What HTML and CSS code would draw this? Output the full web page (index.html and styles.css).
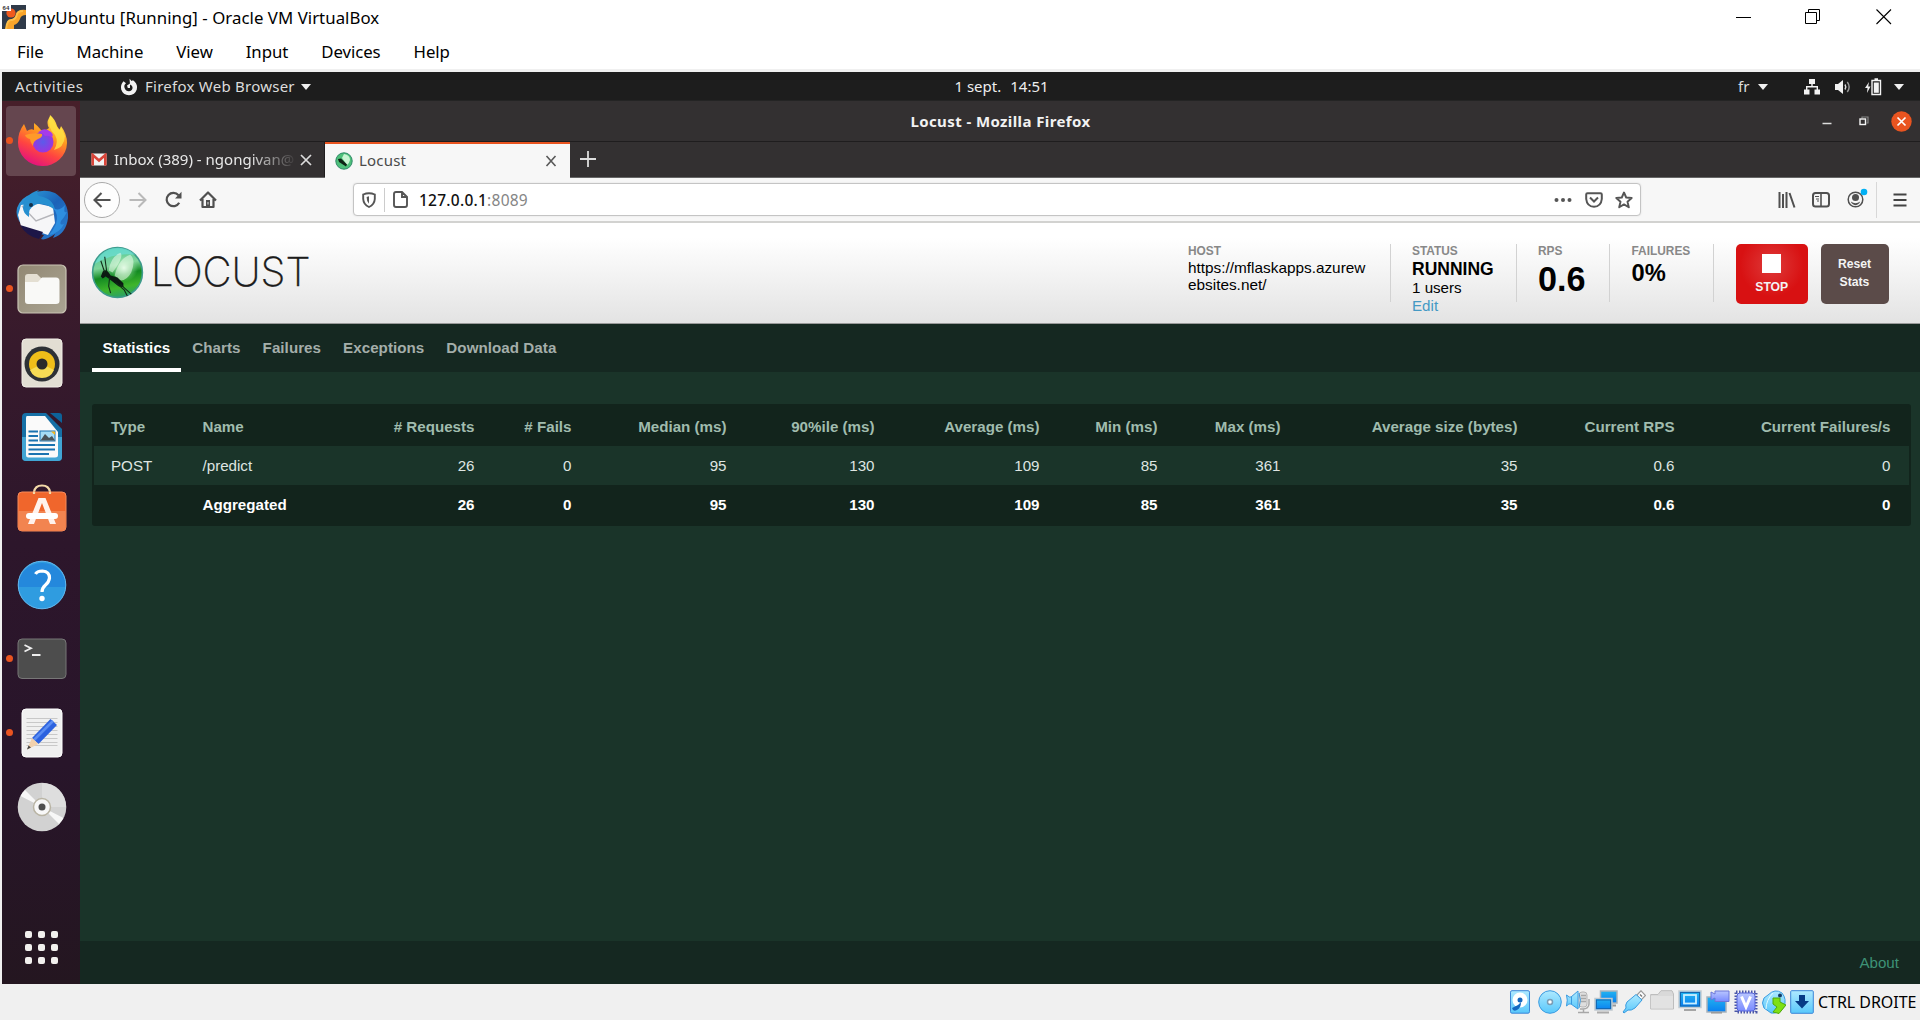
FILE: index.html
```
<!DOCTYPE html>
<html lang="en">
<head>
<meta charset="utf-8">
<title>myUbuntu [Running] - Oracle VM VirtualBox</title>
<link rel="stylesheet" href="styles.css">
</head>
<body>
<svg width="0" height="0" class="defs">
  <defs>
    <linearGradient id="ff" x1=".8" y1="0" x2=".35" y2="1"><stop offset="0" stop-color="#fff44f"/><stop offset=".4" stop-color="#ff9a1f"/><stop offset=".7" stop-color="#ff4540"/><stop offset="1" stop-color="#e3127e"/></linearGradient>
    <radialGradient id="ffc"><stop offset="0" stop-color="#5b5bea"/><stop offset="1" stop-color="#9a35e0"/></radialGradient>
    <linearGradient id="tb" x1="0" y1="0" x2="1" y2="1"><stop offset="0" stop-color="#2fa8e0"/><stop offset=".5" stop-color="#1c62b8"/><stop offset="1" stop-color="#2b7fd2"/></linearGradient>
    <linearGradient id="files" x1="0" y1="0" x2="1" y2="1"><stop offset="0" stop-color="#928873"/><stop offset="1" stop-color="#aaa493"/></linearGradient>
    <linearGradient id="aqua" x1="0" y1="0" x2="0" y2="1"><stop offset="0" stop-color="#aee9ff"/><stop offset="1" stop-color="#59c8fb"/></linearGradient>
    <linearGradient id="blue" x1="0" y1="0" x2="0" y2="1"><stop offset="0" stop-color="#22b4f0"/><stop offset="1" stop-color="#0a7ff0"/></linearGradient>
    <linearGradient id="violet" x1="0" y1="0" x2="0" y2="1"><stop offset="0" stop-color="#b9c6ff"/><stop offset="1" stop-color="#7a8bff"/></linearGradient>
    <linearGradient id="leaf" x1=".4" y1="0" x2=".6" y2="1"><stop offset="0" stop-color="#4cc79a"/><stop offset=".35" stop-color="#7fd49a"/><stop offset=".55" stop-color="#138a22"/><stop offset=".8" stop-color="#3fb52c"/><stop offset="1" stop-color="#2aa06c"/></linearGradient>
    <radialGradient id="glow" cx=".6" cy=".45" r=".4"><stop offset="0" stop-color="#e2fbe6"/><stop offset="1" stop-color="#7fdc8a" stop-opacity="0"/></radialGradient>
  </defs>
  <symbol id="bug" viewBox="0 0 54 54">
    <circle cx="27" cy="27" r="25.4" fill="url(#leaf)" stroke="#3c9a8b" stroke-width="1.6"/>
    <path d="M4 18A25 25 0 0 1 45 9Q25 6 4 18Z" fill="#6fe0dc" opacity=".65"/>
    <circle cx="30" cy="24" r="18" fill="url(#glow)"/>
    <path d="M18 25Q20 11 30 7Q34 11 22 27ZM24 30Q29 12 40 9Q46 14 41 27Q36 36 29 35Z" fill="#e9fbe9" opacity=".55"/>
    <path d="M10 31L12 26Q15 23 18 27L20 30L27 32L33 38L33 42L28 41L19 34L15 31L12 33Z" fill="#0c1a12"/>
    <path d="M14 27L10 15M16 26L14 11M19 32L18 41L20 48M25 37L34 45L37 51M30 39L41 49" fill="none" stroke="#102c18" stroke-width="1.1"/>
  </symbol>
  <symbol id="caret" viewBox="0 0 12 8"><path d="M1 1H11L6 7Z" fill="#f0f0f0"/></symbol>
</svg>

<div class="vm">
  <header class="win">
    <div class="titlebar">
      <svg class="vbox" width="24" height="24" viewBox="0 0 24 24"><rect width="24" height="24" fill="#2f3a49"/><path d="M5 24V19Q5 15 9 15Q13 14 14 10Q15 4 24 5V10Q19 10 18 14Q16 19 12 20V24Z" fill="#f9a52b"/><path d="M4 24Q5 14 10 15Q14 14 15 9Q16 6 21 6" stroke="#ffc04a" stroke-width="2" fill="none"/><circle cx="9" cy="8" r="4.6" fill="#ef5a1e"/><rect width="9" height="6" fill="#fff"/><text x="0.6" y="5.2" class="tiny">64</text></svg>
      <span class="wintitle">myUbuntu [Running] - Oracle VM VirtualBox</span>
      <div class="winbtns">
        <svg width="16" height="16" viewBox="0 0 16 16"><path d="M0 8.5H15" stroke="#000"/></svg>
        <svg width="16" height="16" viewBox="0 0 16 16" fill="none" stroke="#000"><path d="M.5 3.5H11.5V14.5H.5ZM3.5 3V.5H14.5V11.5H12"/></svg>
        <svg width="16" height="16" viewBox="0 0 16 16"><path d="M.5 .5L15 15M15 .5L.5 15" stroke="#000" stroke-width="1.1"/></svg>
      </div>
    </div>
    <nav class="menubar"><span>File</span><span>Machine</span><span>View</span><span>Input</span><span>Devices</span><span>Help</span></nav>
  </header>

  <div class="guest">
    <div class="gnome">
      <div class="gleft">
        <span class="act">Activities</span>
        <svg width="18" height="18" viewBox="0 0 18 18"><path d="M3.500 3.200L6 5.200Q3.600 7 4.600 10Q6 13.500 9.200 13.200Q13 12.500 12.500 9Q12 7 10 6.500L9.500 .8Q11 2 11.500 3L13 2.200L14.500 3.500Q18 7 16.800 11.500Q15 17 9 17.200Q3 17 1.200 11.500Q0 7 3.500 3.200Z" fill="#f2f2f2"/><path d="M7 7.500L10 5.500V10H7.800Z" fill="#f2f2f2"/></svg>
        <span class="app">Firefox Web Browser</span>
        <svg width="12" height="8"><use href="#caret"/></svg>
      </div>
      <div class="clock"><span>1 sept.</span><span>14:51</span></div>
      <div class="tray">
        <span class="lang">fr</span>
        <svg class="c1" width="12" height="8"><use href="#caret"/></svg>
        <svg class="net" width="18" height="16" viewBox="0 0 18 16"><path d="M6 0H12V5H6ZM1 10.500H6.500V15.500H1ZM11.500 10.500H17V15.500H11.500Z" fill="#f2f2f2"/><path d="M9 4V8M3.700 11V7.800H14.300V11" stroke="#f2f2f2" stroke-width="1.400" fill="none"/></svg>
        <svg class="vol" width="18" height="16" viewBox="0 0 18 16"><path d="M1 5H4L9 1V15L4 11H1Z" fill="#f2f2f2"/><path d="M11 5.500Q12.600 8 11 10.500" stroke="#ddd" stroke-width="1.400" fill="none"/><path d="M13.300 3Q17 8 13.300 13" stroke="#999" stroke-width="1.400" fill="none"/></svg>
        <svg class="bat" width="17" height="18" viewBox="0 0 17 18"><path d="M4 4L0 10H2.500L2 15L5.500 8.500H3.200Z" fill="#f2f2f2"/><path d="M7 2.500H15.500V16.500H7ZM9.500 1H13" fill="none" stroke="#f2f2f2" stroke-width="1.400"/><rect x="8.800" y="4.500" width="5" height="10.300" fill="#f2f2f2"/></svg>
        <svg class="c2" width="12" height="8"><use href="#caret"/></svg>
      </div>
    </div>

    <div class="desk">
      <aside class="dock">
        <div class="item on"><i></i><svg width="52" height="52" viewBox="0 0 52 52"><path d="M8 10L11 17Q15 14 18 16L18 9Q22 12 25 16Q30 17 33 14Q30 9 33 4Q34 3 34 1Q39 5 41 12Q42 14 44 16L45 12Q51 20 51 29A24.5 23.5 0 0 1 2 28Q2 18 8 10Z" fill="url(#ff)"/><circle cx="27" cy="28" r="10.5" fill="url(#ffc)"/><path d="M24 17Q29 13 35 18Q38 21 36 23Q31 21 29 22Q24 17 22 18Z" fill="#a63bea"/><path d="M9 21Q17 18 26 20Q27 23 22 25Q17 27 17 32Q14 28 14 25Q10 24 9 21Z" fill="#ff9a2a"/><path d="M34 2Q31 14 39 21Q43 28 38 36Q48 34 49 22L45 13L43 16Q38 8 34 2Z" fill="#ffe645" opacity=".75"/></svg></div>
        <div class="item"><svg width="54" height="54" viewBox="0 0 54 54"><path d="M17 6Q28 0 40 5Q54 14 53 30Q51 46 38 50L40 46Q30 53 26 51L29 47Q12 44 6 36Q0 28 2 20Q6 9 17 6Z" fill="url(#tb)"/><path d="M6 17L20 15L38 19L40 35L33 47L6 38L3 27Z" fill="#f6f6f8"/><path d="M7 18L21 33L39 26" fill="none" stroke="#b5b5ba" stroke-width="1.4"/><path d="M5 37L28 44L24 51Q11 48 5 37Z" fill="#1d1648"/><path d="M8 20Q9 6 24 2Q20 5 24 8Q38 10 40 22Q28 13 20 17Q13 20 14 29Q8 25 8 20Z" fill="#268fd0"/><circle cx="16" cy="17" r="2" fill="#15304a"/><path d="M38 20Q44 26 41 36Q38 43 34 47Q45 45 49 36Q44 38 46 33Q49 30 52 24Q48 26 50 17Q44 24 38 20Z" fill="#2e8ee0"/></svg></div>
        <div class="item"><i></i><svg width="50" height="50" viewBox="0 0 50 50"><rect x="1" y="1" width="48" height="48" rx="5" fill="url(#files)" stroke="#c9c4b4" stroke-width="1.2"/><path d="M8 13Q8 10 11 10H20L24 14H39V20H8Z" fill="#e4dfd2"/><path d="M8 18H21L25 13.5H39Q42.500 13.500 42.500 17V37Q42.500 40 39 40H11Q8 40 8 37Z" fill="#f9f9f7"/></svg></div>
        <div class="item"><svg width="42" height="50" viewBox="0 0 42 50"><rect x="1" y="1" width="40" height="48" rx="4" fill="#e2ded3" stroke="#f1eee7"/><circle cx="21" cy="26" r="17.500" fill="#2d3136"/><circle cx="21" cy="26" r="13" fill="#efbe19"/><path d="M9 32L21 26L33 32A13 13 0 0 1 9 32Z" fill="#f6dc55"/><circle cx="21" cy="26" r="5.500" fill="#2a2a2a"/></svg></div>
        <div class="item"><svg width="42" height="50" viewBox="0 0 42 50"><path d="M5 1H25L41 17V45Q41 49 37 49H5Q1 49 1 45V5Q1 1 5 1Z" fill="#1670a6"/><path d="M1 25H41V45Q41 49 37 49H5Q1 49 1 45Z" fill="#41a5d4"/><path d="M29 1H38Q41 1 41 4V11Z" fill="#0d6299"/><path d="M6 4H24L37 20V43Q37 45.500 34 45.500H7.500Q5 45.500 5 43V6Q5 4 6 4Z" fill="#fafafa"/><path d="M7.500 19.500H17M7.500 24H17M7.500 28.500H17M7.500 33H34M7.500 37.500H34M7.500 42H28" stroke="#1b73b0" stroke-width="2"/><rect x="19" y="19" width="15" height="10" fill="#a5dcf5" stroke="#1b73b0"/><path d="M19.500 28.500L24 22L28 26L31 24L34 28.500Z" fill="#4a5358"/><path d="M30 19.500H34V23Z" fill="#f3b51b"/></svg></div>
        <div class="item"><svg class="bag" width="50" height="48" viewBox="0 0 50 48"><path d="M17 10V8Q18 1.500 25 1.500Q32 1.500 33 8V10" fill="none" stroke="#f3d9a8" stroke-width="2.200"/><rect x="1" y="8" width="48" height="39" rx="4" fill="#f0662c" stroke="#f58a5b"/><path d="M1.500 27H48.500V43Q48.500 46.500 45 46.500H5Q1.500 46.500 1.500 43Z" fill="#f28450"/><path d="M17 10V8M33 10V8" stroke="#f3d9a8" stroke-width="2.200"/><path d="M11 40L21.500 14H28.500L39 40H33L25 19L17 40Z" fill="#fff2ec"/><rect x="9" y="29" width="32" height="6" rx="3" fill="#fff"/></svg></div>
        <div class="item"><svg width="50" height="50" viewBox="0 0 50 50"><circle cx="25" cy="25" r="24" fill="#2f9ce0"/><path d="M1 27A24 24 0 0 1 49 27Z" fill="#2488dc"/><circle cx="25" cy="25" r="23.800" fill="none" stroke="#63b6ec" stroke-width="1"/><path d="M18.500 14Q20 11 25.500 11Q32.500 11.500 32.500 18Q32 22 28.500 25Q25 28 25 32" fill="none" stroke="#fff" stroke-width="3.200"/><circle cx="25" cy="38.500" r="2.700" fill="#fff"/></svg></div>
        <div class="item"><i></i><svg width="50" height="42" viewBox="0 0 50 42"><rect x="1" y="1" width="48" height="39.500" rx="4" fill="#4d4d4d" stroke="#777"/><path d="M7.500 7L14 10.200L7.500 13.500" fill="none" stroke="#eee" stroke-width="1.800"/><path d="M15 17H23.500" stroke="#eee" stroke-width="2"/></svg></div>
        <div class="item"><i></i><svg width="42" height="50" viewBox="0 0 42 50"><rect x="1" y="1" width="40" height="48" rx="4" fill="#f0f0f0" stroke="#fff"/><path d="M5.500 10.500H36.500M5.500 14.500H36.500M5.500 18.500H36.500M5.500 22.500H36.500M5.500 26.500H36.500M5.500 30.500H36.500M5.500 34.500H36.500M5.500 37.500H36.500" stroke="#c8c8c8"/><path d="M11 30L29.500 11L36 17L17.500 36Z" fill="#2c62df"/><path d="M13 32L32 13" stroke="#5a8df2" stroke-width="2.500"/><path d="M11 30L17.500 36L6 41.500Z" fill="#f2d1ad"/><path d="M6 41.500L7.500 37.500L10 39.500Z" fill="#444"/></svg></div>
        <div class="item"><svg width="50" height="50" viewBox="0 0 50 50"><circle cx="25" cy="25" r="24.300" fill="#d2d2d2"/><path d="M25 25L8 8A24 24 0 0 0 3.500 14ZM25 25L46.500 36A24 24 0 0 1 42 42Z" fill="#f7f7f7"/><path d="M25 25L25 1A24 24 0 0 1 49 25Z" fill="#dedede"/><circle cx="25" cy="25" r="8.500" fill="#f8f8f8" stroke="#b9b4a4" stroke-width="1.500"/><circle cx="25" cy="25" r="3.500" fill="#505050"/></svg></div>
        <div class="grid"><b></b><b></b><b></b><b></b><b></b><b></b><b></b><b></b><b></b></div>
      </aside>

      <section class="ffx">
        <div class="fftitle">
          <span>Locust - Mozilla Firefox</span>
          <div class="ffbtns">
            <svg width="10" height="10" viewBox="0 0 10 10"><path d="M.5 7.500H9.500" stroke="#ddd" stroke-width="1.500"/></svg>
            <svg width="10" height="10" viewBox="0 0 10 10"><path d="M3 2.500V1H9V7H7.500" fill="none" stroke="#888" stroke-width="1.200"/><rect x="1" y="3" width="5.500" height="5.500" fill="none" stroke="#f4f4f4" stroke-width="1.400"/></svg>
            <svg width="21" height="21" viewBox="0 0 21 21"><circle cx="10.500" cy="10.500" r="10.200" fill="#e95420"/><path d="M6.500 6.500L14.500 14.500M14.500 6.500L6.500 14.500" stroke="#fff" stroke-width="1.700"/></svg>
          </div>
        </div>
        <div class="tabs">
          <div class="tab">
            <svg width="16" height="13" viewBox="0 0 16 13"><rect x=".5" y=".5" width="15" height="12" rx="1" fill="#f2f2f2"/><path d="M1.700 12.500V2L8 7.500L14.300 2V12.500" fill="none" stroke="#d9453a" stroke-width="2.600"/></svg>
            <span class="tt fade">Inbox (389) - ngongivan@</span>
            <svg class="x" width="12" height="12" viewBox="0 0 12 12"><path d="M1 1L11 11M11 1L1 11" stroke="#dcdcdc" stroke-width="1.700"/></svg>
          </div>
          <div class="tab active">
            <svg width="18" height="18" viewBox="0 0 18 18"><circle cx="9" cy="9" r="8.200" fill="#4ec07a" stroke="#2f8a68"/><path d="M9 2Q15 3 15 8Q14 12 12 13L7 6Z" fill="#c8f5d2"/><path d="M3 7L6 6.500L12 12.500L11 14.500L4 10Z" fill="#0e2415"/></svg>
            <span class="tt">Locust</span>
            <svg class="x" width="12" height="12" viewBox="0 0 12 12"><path d="M1.500 1L10.500 11M10.500 1L1.500 11" stroke="#585858" stroke-width="1.600"/></svg>
          </div>
          <svg class="plus" width="16" height="16" viewBox="0 0 16 16"><path d="M8 0V16M0 8H16" stroke="#ddd" stroke-width="1.800"/></svg>
        </div>
        <div class="toolbar">
          <div class="navs">
            <span class="back"><svg width="18" height="18" viewBox="0 0 18 18"><path d="M17.500 9H1.500M8.500 2L1.500 9L8.500 16" fill="none" stroke="#505050" stroke-width="2.100"/></svg></span>
            <svg class="fwd" width="18" height="16" viewBox="0 0 18 16"><path d="M.5 8H16M9.500 1L16.500 8L9.500 15" fill="none" stroke="#b9b9b9" stroke-width="2"/></svg>
            <svg class="rel" width="18" height="17" viewBox="0 0 18 17"><path d="M14.200 11.800A6.700 6.700 0 1 1 13.500 4.200" fill="none" stroke="#505050" stroke-width="2.200"/><path d="M16.500 .8V7.500H10Z" fill="#505050"/></svg>
            <svg class="home" width="18" height="18" viewBox="0 0 18 18"><path d="M1 9.500L9 1.500L17 9.500M3.500 8V16H14.500V8" fill="none" stroke="#505050" stroke-width="2.200" stroke-linejoin="round"/><path d="M7 16V9H11V16Z" fill="#505050"/><path d="M9 11V13.500" stroke="#ddd"/></svg>
          </div>
          <div class="url">
            <svg class="sh" width="14" height="16" viewBox="0 0 14 16"><path d="M1.200 2.500Q7 0 12.800 2.500V7Q12.500 12.500 7 15Q1.500 12.500 1.200 7Z" fill="none" stroke="#555" stroke-width="1.900"/><path d="M7 4.200V11.800Q4.600 9.500 4.600 5Z" fill="#555"/></svg>
            <i></i>
            <svg class="doc" width="15" height="17" viewBox="0 0 15 17"><path d="M3 1H9L14 6V14Q14 16 12 16H3Q1 16 1 14V3Q1 1 3 1ZM9 1V6H14" fill="none" stroke="#555" stroke-width="1.900"/></svg>
            <span class="addr"><b>127.0.0.1</b>:8089</span>
            <svg class="dots" width="18" height="6" viewBox="0 0 18 6" fill="#555"><circle cx="2.500" cy="3" r="2"/><circle cx="9" cy="3" r="2"/><circle cx="15.500" cy="3" r="2"/></svg>
            <svg class="pk" width="18" height="16" viewBox="0 0 18 16"><path d="M2.500 1.200H15.500Q16.800 1.200 16.800 2.500V7Q16 14.500 9 14.800Q2 14.500 1.200 7V2.500Q1.200 1.200 2.500 1.200Z" fill="none" stroke="#555" stroke-width="2"/><path d="M5 5.500L9 9.500L13 5.500" fill="none" stroke="#555" stroke-width="2"/></svg>
            <svg class="star" width="18" height="18" viewBox="0 0 18 18"><path d="M9 1.500L11.200 6.500L16.700 7L12.500 10.800L13.800 16.300L9 13.400L4.200 16.300L5.500 10.800L1.300 7L6.800 6.500Z" fill="none" stroke="#555" stroke-width="1.900" stroke-linejoin="round"/></svg>
          </div>
          <div class="rtools">
            <svg width="18" height="16" viewBox="0 0 18 16"><path d="M1.500 0V16M5 2V16M8.500 0V16M11.500 1L16.500 15.500" stroke="#505050" stroke-width="2"/></svg>
            <svg class="side" width="18" height="16" viewBox="0 0 18 16"><rect x="1" y="1" width="16" height="13.500" rx="2.500" fill="none" stroke="#505050" stroke-width="2"/><path d="M9 1V14" stroke="#505050" stroke-width="1.600"/><path d="M3 4.500H7M4 7H7M5 9H7" stroke="#505050"/></svg>
            <svg class="acc" width="21" height="20" viewBox="0 0 21 20"><circle cx="8.500" cy="11.500" r="7.300" fill="none" stroke="#505050" stroke-width="1.500"/><circle cx="8.500" cy="9.500" r="3.500" fill="#505050"/><path d="M3.800 13.500Q8.500 17 13.200 13.500Q12 16.800 8.500 17.300Q5 16.800 3.800 13.500Z" fill="#505050"/><circle cx="17" cy="4" r="3.300" fill="#00b0f4"/></svg>
            <i></i>
            <svg class="burg" width="14" height="14" viewBox="0 0 14 14"><path d="M.5 1.500H13.500M.5 7H13.500M.5 12.500H13.500" stroke="#444" stroke-width="2"/></svg>
          </div>
        </div>

        <main class="page">
          <header class="top">
            <svg class="mark" width="53" height="53"><use href="#bug"/></svg>
            <span class="logo">LOCUST</span>
            <div class="box host"><label>HOST</label><p>https://mflaskapps.azurewebsites.net/</p></div>
            <div class="box status"><label>STATUS</label><strong>RUNNING</strong><p>1 users</p><a>Edit</a></div>
            <div class="box rps"><label>RPS</label><strong>0.6</strong></div>
            <div class="box fails"><label>FAILURES</label><strong>0%</strong></div>
            <div class="btn stop"><i></i>STOP</div>
            <div class="btn reset">Reset<br>Stats</div>
          </header>
          <nav class="nav"><a class="sel">Statistics</a><a>Charts</a><a>Failures</a><a>Exceptions</a><a>Download Data</a></nav>
          <div class="content">
            <table>
              <colgroup><col class="w1"><col class="w2"><col class="w3"><col class="w4"><col class="w5"><col class="w6"><col class="w7"><col class="w8"><col class="w9"><col class="w10"><col class="w11"><col class="w12"></colgroup>
              <thead><tr><th>Type</th><th>Name</th><th># Requests</th><th># Fails</th><th>Median (ms)</th><th>90%ile (ms)</th><th>Average (ms)</th><th>Min (ms)</th><th>Max (ms)</th><th>Average size (bytes)</th><th>Current RPS</th><th>Current Failures/s</th></tr></thead>
              <tbody>
                <tr><td>POST</td><td>/predict</td><td>26</td><td>0</td><td>95</td><td>130</td><td>109</td><td>85</td><td>361</td><td>35</td><td>0.6</td><td>0</td></tr>
                <tr class="total"><td></td><td>Aggregated</td><td>26</td><td>0</td><td>95</td><td>130</td><td>109</td><td>85</td><td>361</td><td>35</td><td>0.6</td><td>0</td></tr>
              </tbody>
            </table>
          </div>
          <footer class="foot"><a>About</a></footer>
        </main>
      </section>
    </div>
  </div>

  <div class="statusbar">
    <svg viewBox="0 0 24 24"><rect x="2.500" y=".7" width="19" height="22.500" rx="1.500" fill="url(#aqua)" stroke="#3b86d8"/><circle cx="12" cy="10" r="7.500" fill="#fff"/><circle cx="12" cy="10" r="2.500" fill="#1668c0"/><path d="M4 18L10 15L13 12Q13 18 9 20Q5 22 4 18Z" fill="#1668c0"/></svg>
    <svg viewBox="0 0 24 24"><circle cx="12" cy="12" r="11.300" fill="url(#aqua)" stroke="#3b9be0"/><circle cx="12" cy="12" r="2.500" fill="#fff" stroke="#7a9cb5" stroke-width="1.500"/></svg>
    <svg viewBox="0 0 24 24"><rect x="13" y="2" width="8" height="15" rx="3" fill="#dedede" stroke="#b5b5b5"/><path d="M15 5.500H20M15 8.500H20M15 11.500H20M23 9V14Q22.500 19 17 19H14M17.500 19V22M12 22.500H23" stroke="#a8a8a8" stroke-width="1.500" fill="none"/><path d="M.5 5Q4 8 5 7L12 1V19L5 14Q3 13 .5 16Q2 10 .5 5Z" fill="url(#aqua)" stroke="#3b9be0"/><path d="M5.500 7V14M13 3Q16 10 13 18" fill="none" stroke="#3b9be0"/></svg>
    <svg viewBox="0 0 24 24"><rect x="6.500" y="1" width="16.500" height="12" fill="url(#blue)" stroke="#a9b3bb" stroke-width="1.500"/><path d="M17 15.500H22" stroke="#999" stroke-width="2"/><rect x="1" y="8.500" width="17" height="11.500" fill="url(#blue)" stroke="#c0c8ce" stroke-width="1.500"/><rect x="2.500" y="10" width="14" height="8.500" fill="none" stroke="#1469b5"/><path d="M3 22.500H15" stroke="#aaa" stroke-width="2"/></svg>
    <svg viewBox="0 0 24 24"><path d="M15 5L19 .8L23.500 5.500L19 10Z" fill="#fff" stroke="#9a9a9a" stroke-width="1.200"/><path d="M18 4.500L20 6.500" stroke="#777" stroke-width="1.500"/><path d="M5 12L14 4.500L20 10L13 18Q9 21 6 20L2 23L1 22L4 18Q3 15 5 12Z" fill="url(#aqua)" stroke="#3b9be0"/></svg>
    <svg viewBox="0 0 24 24"><path d="M.7 4.500H8L11 .7H22L23.500 4V19H.7Z" fill="#d9d9d9" stroke="#bdbdbd"/><path d="M1 6H23V18.500H1Z" fill="#e2e2e2"/></svg>
    <svg viewBox="0 0 24 24"><rect x="1" y="1" width="22" height="16.500" fill="#2b9ff0" stroke="#c3cbd1" stroke-width="1.500"/><rect x="2.500" y="2.500" width="19" height="13.500" fill="url(#blue)" stroke="#1666ad"/><rect x="6" y="5" width="12" height="8.500" fill="none" stroke="#c9efff" stroke-width="1.800"/><path d="M6 20H18" stroke="#a5a5a5" stroke-width="2"/></svg>
    <svg viewBox="0 0 24 24"><rect x="1" y="7" width="19" height="15" fill="url(#blue)" stroke="#a8b2bb" stroke-width="1.500"/><path d="M5 22.800H16" stroke="#999" stroke-width="1.500"/><path d="M5 2L9 4V1H23V11.500H9V8L5 10Z" fill="url(#violet)" stroke="#6a76d8"/></svg>
    <svg viewBox="0 0 24 24"><rect x="2" y="2" width="20" height="20" fill="none" stroke="#4b57a8" stroke-width="3" stroke-dasharray="1.500 1.500"/><rect x="3" y="3" width="18" height="18" rx="3" fill="url(#violet)" stroke="#5665d8"/><path d="M7.500 6.500L12 17L16.500 6.500" fill="none" stroke="#fff" stroke-width="3"/></svg>
    <svg viewBox="0 0 24 24"><path d="M6 5Q13-2 20 3Q25 9 22 17Q17 24 9 23L2 18Q-1 13 2 8Z" fill="url(#aqua)" stroke="#3b9be0"/><path d="M4 19Q4 10 11 3" fill="none" stroke="#e3fbff"/><circle cx="18" cy="5.500" r="2" fill="#123b66"/><path d="M11 8H18V12L24 15L17 23.500L11 22L15 17L11 14Z" fill="#7fe014" stroke="#4ea80c"/></svg>
    <svg viewBox="0 0 24 24"><rect x=".7" y=".7" width="22.600" height="22.600" rx="1" fill="url(#aqua)" stroke="#3b86d8"/><path d="M9 5H15V11H19L12 18.500L5 11H9Z" fill="#063a86"/></svg>
    <span>CTRL DROITE</span>
  </div>
</div>
</body>
</html>
```

FILE: styles.css
```
* { box-sizing: border-box; }
body { margin: 0; background: #fff; }
svg { display: block; flex: none; }
.defs { position: absolute; }
p { margin: 0; }

.vm { width: 1920px; height: 1020px; display: flex; flex-direction: column; background: #f0f0f0; overflow: hidden; }

/* Host window */
.win { height: 69px; background: #fff; font-family: "Noto Sans", "Open Sans", sans-serif; color: #000; flex: none; }
.titlebar { height: 34px; display: flex; align-items: center; padding-left: 2px; }
.tiny { font: bold 6px "Liberation Sans", sans-serif; fill: #333; }
.wintitle { margin-left: 5px; font-size: 16.8px; line-height: 34px; letter-spacing: .05px; padding-top: 1px; flex: 1; }
.winbtns { display: flex; gap: 54px; padding-right: 28px; }
.winbtns svg:first-child { margin-right: -1px; }
.winbtns svg:last-child { margin-left: 1px; }
.menubar { display: flex; padding-left: 17px; gap: 33px; font-size: 16.8px; line-height: 35px; letter-spacing: -.07px; }

/* Guest screen */
.guest { height: 912px; margin: 3px 0 0 2px; display: flex; flex-direction: column; flex: none; font-family: "Noto Sans", "Open Sans", sans-serif; }
.gnome { height: 29px; background: #1d1d1d; color: #dcdcdc; font-size: 15px; line-height: 29px; display: grid; grid-template-columns: 1fr auto 1fr; border-bottom: 1px solid #242424; }
.gleft { display: flex; align-items: center; padding-left: 13px; }
.act { width: 105px; letter-spacing: .6px; }
.app { margin: 0 6px 0 7px; letter-spacing: .25px; width: 149px; white-space: nowrap; }
.clock { display: flex; gap: 9px; color: #eee; margin-left: 81px; }
.tray { display: flex; align-items: center; justify-content: flex-end; padding-right: 15px; }
.lang { width: 19px; color: #ddd; }
.net { margin-left: 34px; }
.vol { margin-left: 13px; }
.bat { margin-left: 13px; }
.c2 { margin-left: 11px; }

.desk { flex: 1; display: flex; min-height: 0; }
.dock { width: 78px; background: linear-gradient(#471f2a, #371a2c 28%, #2d162b 50%, #28152a 75%, #241620); padding-top: 3px; flex: none; display: flex; flex-direction: column; }
.item { height: 74px; width: 70px; margin-left: 4px; display: flex; align-items: center; justify-content: center; position: relative; flex: none; }
.item svg { margin-left: 1px; }
.on { height: 70px; margin-top: 2px; margin-bottom: 2px; background: #65464f; border-radius: 4px; }
.on svg { margin-bottom: 2px; }
.item i { position: absolute; left: 0; top: 50%; width: 7px; height: 7px; margin-top: -4px; border-radius: 50%; background: #e95420; }
.item .bag { margin-bottom: 7px; }
.grid { display: grid; grid-template-columns: repeat(3, 7px); gap: 6px; margin: auto 0 20px 22.5px; }
.grid b { width: 7px; height: 7px; border-radius: 2px; background: #f2f0ee; }

/* Firefox */
.ffx { flex: 1; display: flex; flex-direction: column; min-width: 0; }
.fftitle { height: 41px; background: #333031; border-bottom: 1px solid #1f1d1e; color: #f2f2f2; display: grid; grid-template-columns: 1fr auto 1fr; font-size: 15px; font-weight: 700; line-height: 40px; letter-spacing: .4px; }
.fftitle span { grid-column: 2; padding-left: 1px; }
.ffbtns { display: flex; align-items: center; justify-content: flex-end; padding-right: 8px; gap: 27px; }
.ffbtns svg:last-child { margin-left: -5px; }
.tabs { height: 36px; background: #333031; display: flex; color: #e8e8e8; font-size: 15px; border-bottom: 1px solid #666; }
.tab { width: 245px; display: flex; align-items: center; padding-left: 11px; border-right: 1px solid #1f1d1e; }
.tt { margin-left: 7px; width: 180px; white-space: nowrap; overflow: hidden; padding-bottom: 2px; }
.fade { mask-image: linear-gradient(90deg, #000 75%, transparent 102%); }
.tab .x { margin-left: 6px; }
.active { background: #f7f7f7; color: #4a4a4a; border-top: 2px solid #e95420; border-right: 0; margin-bottom: -1px; padding-left: 10px; padding-bottom: 1px; }
.active .tt { width: 180px; margin-left: 6px; letter-spacing: .2px; }
.plus { margin: 9px 0 0 10px; }
.toolbar { height: 45px; background: #f7f7f7; border-bottom: 2px solid #d2d2d0; display: flex; align-items: center; flex: none; }
.navs { width: 273px; display: flex; align-items: center; padding-left: 4px; }
.back { width: 36px; height: 36px; border: 1px solid #aaa; border-radius: 50%; background: #fdfdfd; display: flex; align-items: center; justify-content: center; }
.fwd { margin-left: 9px; }
.rel { margin-left: 18px; }
.home { margin-left: 16px; }
.url { width: 1288px; height: 33px; border: 1px solid #c4c4c4; border-radius: 4px; background: #fff; box-shadow: 0 0 2px #ddd; display: flex; align-items: center; padding-left: 8px; color: #858585; font-size: 15.5px; }
.url i { width: 1px; height: 24px; background: #ccc; margin: 0 8px; }
.addr { margin-left: 11px; flex: 1; letter-spacing: .25px; }
.addr b { font-weight: 500; color: #111; }
.pk { margin-left: 13px; }
.star { margin: 0 7px 0 12px; }
.rtools { margin-left: auto; display: flex; align-items: center; padding-right: 13px; }
.side { margin-left: 16px; }
.acc { margin: -4px 0 0 17px; }
.rtools i { width: 1px; height: 36px; background: #d8d8d8; margin: 0 16px 0 8px; }

/* Locust page */
.page { flex: 1; display: flex; flex-direction: column; background: #1a3429; font-family: "Liberation Sans", Arial, sans-serif; font-size: 15.15px; min-height: 0; }
.top { height: 101px; background: linear-gradient(#fff 15%, #e3e3e3); border-bottom: 1px solid #999; display: flex; padding: 21px 31.5px 0 11px; color: #000; flex: none; }
.mark { margin-top: 2px; }
.logo { font: 200 40px/48px "Inter", sans-serif; color: #1c1c1c; -webkit-text-stroke: .3px #1c1c1c; letter-spacing: 0; margin: 4px auto 0 7px; }
.box { height: 58px; border-right: 1px solid #d2d2d2; padding-left: 21.5px; line-height: 17px; white-space: nowrap; }
.box label { display: block; font-size: 11.9px; font-weight: 700; color: #888; line-height: 15px; }
.box strong { display: block; }
.host { width: 224px; }
.host p { width: 182px; word-break: break-all; white-space: normal; font-size: 15.35px; }
.status { width: 126px; }
.status strong { font-size: 17.5px; line-height: 20px; }
.status p { line-height: 18px; }
.status a { display: block; color: #4499c4; line-height: 17px; }
.rps { width: 93.5px; }
.rps strong { font-size: 34.2px; line-height: 40px; }
.fails { width: 104px; }
.fails strong { font-size: 23.7px; line-height: 28px; }
.btn { height: 60px; border-radius: 5px; color: #f4f4f4; font-size: 12.2px; font-weight: 700; text-align: center; }
.stop { width: 72.5px; margin-left: 21.5px; background: radial-gradient(circle at 50% 35%, #de3a3a, #d81112 60%); line-height: 14px; }
.stop i { display: block; width: 19px; height: 19px; margin: 9.5px auto 7px; background: #fff; }
.reset { width: 68px; margin-left: 12.5px; background: #5b4b49; line-height: 17.5px; padding-top: 12px; }
.nav { height: 48px; background: #152821; display: flex; padding-left: 11.5px; font-weight: 700; color: #a4aeaa; flex: none; }
.nav a { padding: 0 11px; line-height: 48px; letter-spacing: .05px; }
.nav .sel { color: #fff; border-bottom: 4px solid #fff; }
.content { flex: 1; padding: 32px 10px 0 11.5px; }
table { width: 1819px; height: 122px; table-layout: fixed; border-collapse: separate; border-spacing: 0; border: 2px solid #12241c; background: #12241c; border-radius: 3px; color: #dfe5e2; }
th, td { padding: 0 18px 0 0; text-align: right; white-space: nowrap; height: 39px; }
th { color: #a0bcae; height: 40px; }
tbody tr { background: #1a3429; }
tbody .total { background: #12241c; font-weight: 700; color: #fff; }
th:first-child, td:first-child { text-align: left; padding-left: 17.5px; padding-right: 0; }
th:nth-child(2), td:nth-child(2) { text-align: left; padding-left: 18px; }
.w1 { width: 91px; } .w2 { width: 188px; } .w3 { width: 120px; } .w4 { width: 97px; }
.w5 { width: 155px; } .w6 { width: 148px; } .w7 { width: 165px; } .w8 { width: 118px; }
.w9 { width: 123px; } .w10 { width: 237px; } .w11 { width: 157px; } .w12 { width: 216px; }
.foot { height: 43px; background: #152821; color: #3d9276; text-align: right; padding-right: 21px; line-height: 43px; flex: none; }

/* VirtualBox status bar */
.statusbar { flex: 1; display: flex; align-items: center; justify-content: flex-end; gap: 4px; padding-right: 3px; font: 16px "Noto Sans", sans-serif; letter-spacing: -.04px; color: #000; }
.statusbar svg { width: 24px; height: 24px; }
.statusbar svg:first-child { margin-right: 2px; }
.statusbar span { width: 99px; white-space: nowrap; }
```
